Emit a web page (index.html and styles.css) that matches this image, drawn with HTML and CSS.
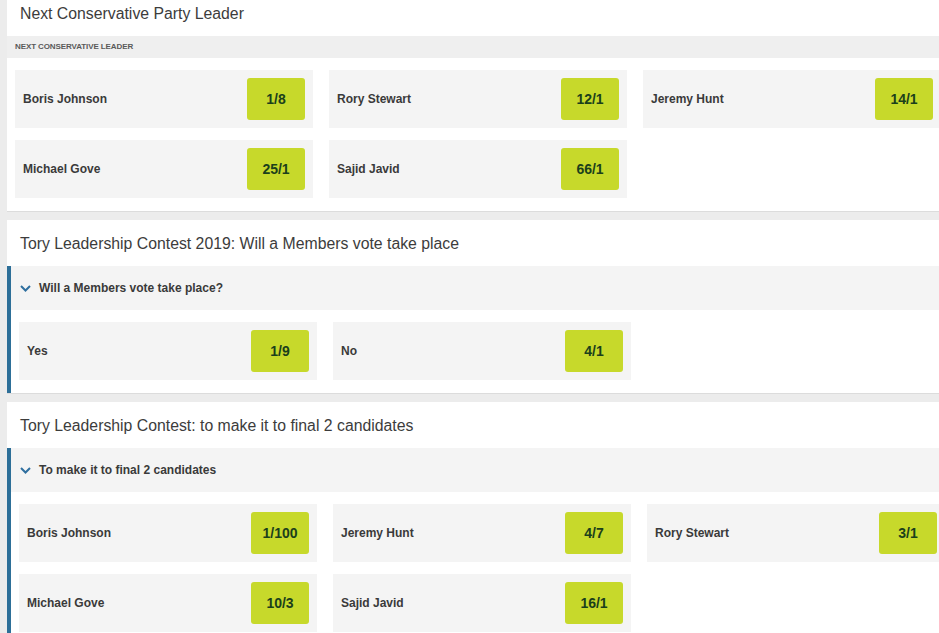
FILE: index.html
```html
<!DOCTYPE html>
<html lang="en">
<head>
<meta charset="utf-8">
<title>Politics betting</title>
<link rel="stylesheet" href="styles.css">
</head>
<body>
<div class="page">
  <section class="card">
    <h2 class="card-title">Next Conservative Party Leader</h2>
    <div class="band">NEXT CONSERVATIVE LEADER</div>
    <div class="grid">
      <div class="cell"><span class="name">Boris Johnson</span><span class="odds">1/8</span></div>
      <div class="cell"><span class="name">Rory Stewart</span><span class="odds">12/1</span></div>
      <div class="cell"><span class="name">Jeremy Hunt</span><span class="odds">14/1</span></div>
      <div class="cell"><span class="name">Michael Gove</span><span class="odds">25/1</span></div>
      <div class="cell"><span class="name">Sajid Javid</span><span class="odds">66/1</span></div>
    </div>
  </section>

  <section class="card">
    <h2 class="card-title">Tory Leadership Contest 2019: Will a Members vote take place</h2>
    <div class="market">
      <div class="market-head">
        <svg class="chev" width="11" height="7" viewBox="0 0 11 7"><polyline points="1,1 5.5,5.5 10,1" fill="none" stroke="#2f6f9f" stroke-width="2"/></svg>
        <span>Will a Members vote take place?</span>
      </div>
      <div class="grid">
        <div class="cell"><span class="name">Yes</span><span class="odds">1/9</span></div>
        <div class="cell"><span class="name">No</span><span class="odds">4/1</span></div>
      </div>
    </div>
  </section>

  <section class="card">
    <h2 class="card-title">Tory Leadership Contest: to make it to final 2 candidates</h2>
    <div class="market">
      <div class="market-head">
        <svg class="chev" width="11" height="7" viewBox="0 0 11 7"><polyline points="1,1 5.5,5.5 10,1" fill="none" stroke="#2f6f9f" stroke-width="2"/></svg>
        <span>To make it to final 2 candidates</span>
      </div>
      <div class="grid">
        <div class="cell"><span class="name">Boris Johnson</span><span class="odds">1/100</span></div>
        <div class="cell"><span class="name">Jeremy Hunt</span><span class="odds">4/7</span></div>
        <div class="cell"><span class="name">Rory Stewart</span><span class="odds">3/1</span></div>
        <div class="cell"><span class="name">Michael Gove</span><span class="odds">10/3</span></div>
        <div class="cell"><span class="name">Sajid Javid</span><span class="odds">16/1</span></div>
      </div>
    </div>
  </section>
</div>
</body>
</html>
```
FILE: styles.css
```css
html, body {
  margin: 0;
  padding: 0;
  overflow: hidden;
  background: #ececec;
  font-family: "Liberation Sans", Arial, sans-serif;
  color: #333;
}

.page {
  margin-top: -10px;
  padding-left: 7px;
  width: 960px;
}

.card {
  width: 945px;
  background: #fff;
  border-bottom: 1px solid #dcdcdc;
  margin-bottom: 8px;
  padding-bottom: 13px;
}

.card-title {
  margin: 0;
  padding: 14px 0 12px 13px;
  font-size: 15.8px;
  line-height: 20px;
  font-weight: normal;
  color: #3c3c3c;
}

.band {
  height: 22px;
  line-height: 22px;
  background: #efefef;
  padding-left: 8px;
  font-size: 8px;
  font-weight: bold;
  color: #5a5a5a;
  letter-spacing: -0.1px;
}

.grid {
  display: grid;
  grid-template-columns: repeat(3, 298px);
  column-gap: 16px;
  row-gap: 12px;
  padding: 12px 8px 0 8px;
}

.cell {
  height: 58px;
  background: #f4f4f4;
  display: flex;
  align-items: center;
  justify-content: space-between;
  padding: 0 8px;
}

.name {
  font-size: 12px;
  font-weight: bold;
  color: #3a3a3a;
}

.odds {
  width: 58px;
  height: 42px;
  border-radius: 3px;
  background: #c7d92b;
  color: #1b401b;
  font-size: 14px;
  font-weight: bold;
  display: flex;
  align-items: center;
  justify-content: center;
}

.market {
  border-left: 4px solid #2d6f98;
  margin-bottom: -13px;
  padding-bottom: 13px;
}

.market-head {
  height: 44px;
  background: #f4f4f4;
  display: flex;
  align-items: center;
  gap: 8px;
  padding-left: 9px;
  font-size: 12px;
  font-weight: bold;
  color: #3a3a3a;
}

.chev {
  display: block;
}
```
